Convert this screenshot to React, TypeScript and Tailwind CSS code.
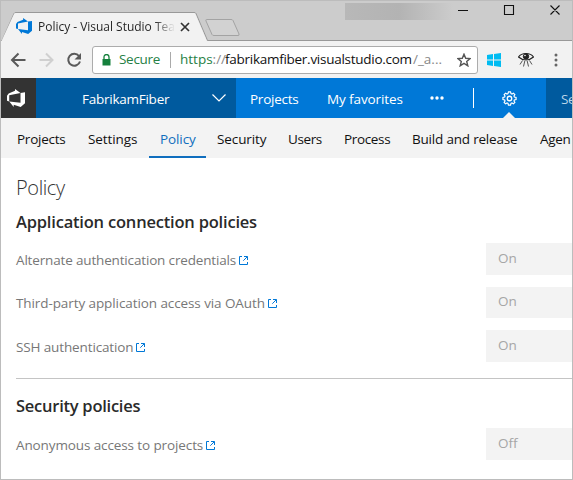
import React from "react";

function DevOpsLogo({ className, fill }: { className: string; fill: string }) {
  return (
    <svg viewBox="0 0 24 24" className={className} fill={fill}>
      <path d="M0 8.877 2.247 5.910l8.405-3.416V.022l7.370 5.393L2.966 8.338v8.225L0 15.707Zm24-4.450v14.651l-5.753 4.900-9.303-3.057v3.056l-5.978-7.416 15.057 1.798V5.415Z" />
    </svg>
  );
}

function ExternalLink() {
  return (
    <svg viewBox="0 0 9 9" className="ml-[3px] h-[9px] w-[9px] shrink-0" fill="none" stroke="#0078d7">
      <path d="M3 .5H.5v8h8V6M5 .5h3.500V4M8.300.7 4.300 4.700" />
    </svg>
  );
}

function PolicyRow({ label, value, className, spacing }: { label: string; value: string; className: string; spacing: string }) {
  return (
    <div className={`flex items-center ${className}`}>
      <div className="flex w-[470px] shrink-0 items-center pt-[2px]">
        <span className={`whitespace-nowrap text-[13.5px] text-[#777] ${spacing}`}>{label}</span>
        <ExternalLink />
      </div>
      <div className="flex h-full flex-1 items-center bg-[#f3f3f3] pb-[2px] pl-3 text-[13.5px] text-[#a6a6a6]">{value}</div>
    </div>
  );
}

function TabStrip() {
  return (
    <div className="relative h-[40px] shrink-0 bg-[#cccccc]">
      <div className="absolute top-[2px] left-[344px] h-[17px] w-[108px] bg-gradient-to-r from-[#b8b8b8] via-[#b3b3b3] to-[#cccccc]" />
      <svg viewBox="0 0 571 40" className="absolute inset-0 h-[40px] w-[571px]">
        <path d="M0 39.500H1L13 12.500Q13.500 11.500 15 11.500H193Q194.500 11.500 195 12.500L206.500 39.500H571" fill="none" stroke="#999" />
        <path d="M.5 40 13 13Q13.500 12 15 12H193Q194 12 194.500 13L206 40Z" fill="#f2f2f2" />
        <path d="M205.500 18.500H230Q231.500 18.500 232 19.500L238 33Q238.500 34.500 237 34.500H213Q211.500 34.500 211 33.500L205 20Q204.500 18.500 205.500 18.500Z" fill="#d2d2d2" stroke="#a3a3a3" />
        <path d="m180 22 8 8m0-8-8 8" stroke="#333" strokeWidth="1.700" />
        <path d="M457 9.500h10M503.500 4.500h9v9h-9ZM549.500 4.500l9 9m0-9-9 9" fill="none" stroke="#111" strokeWidth="1.100" />
      </svg>
      <div className="relative flex h-full pl-[15px] pt-[17px]">
        <DevOpsLogo className="h-4 w-4" fill="#0078d7" />
        <span className="ml-[6px] w-[140px] overflow-hidden whitespace-nowrap bg-gradient-to-r from-[#222222] from-83% to-transparent to-98% bg-clip-text text-[12px] leading-[17px] tracking-[-0.02px] text-transparent">
          Policy - Visual Studio Tea
        </span>
      </div>
    </div>
  );
}

function AddressBar() {
  return (
    <div className="flex h-[37px] shrink-0 items-center bg-[#f2f2f2] pl-[9px]">
      <svg viewBox="0 0 72 16" className="h-4 w-[72px]" fill="none" strokeWidth="2">
        <path d="M15.500 8H2.500M8.500 1.500 2 8l6.500 6.500" stroke="#5a5a5a" />
        <path d="M29.500 8H42M36 1.500l6.500 6.500-6.500 6.500" stroke="#d0d0d0" />
        <path d="M69 4A6 6 0 1 0 70 9.500" stroke="#5a5a5a" />
        <path d="M71 1v6.500h-6.500Z" fill="#5a5a5a" />
      </svg>
      <div className="ml-[10px] flex h-[28px] w-[386px] items-center rounded-[3px] border border-[#acacac] bg-white pl-[9px] text-[13.5px] whitespace-nowrap">
        <svg viewBox="0 0 9 12" className="h-3 w-[9px]" fill="#15803c">
          <path d="M.5 5H8.500V11.500H.5Z" />
          <path d="M2 5.500V3a2.500 2.500 0 0 1 5 0V5.500" fill="none" stroke="#15803c" strokeWidth="1.300" />
        </svg>
        <span className="ml-[8px] w-[51px] tracking-[-0.3px] text-[#268045]">Secure</span>
        <span className="h-4 w-px bg-[#aaa]" />
        <span className="ml-[9px] w-[45px] text-[#268045]">https<span className="text-[#888]">://</span></span>
        <span className="w-[188px] tracking-[-0.27px] text-[#111]">fabrikamfiber.visualstudio.com</span>
        <span className="w-[44px] text-[#888]">/_a...</span>
        <svg viewBox="0 0 14 14" className="h-[14px] w-[14px]" fill="none" stroke="#555" strokeWidth="1.400">
          <path d="m7 1.200 1.700 4.100 4.400.3L9.700 8.400l1.100 4.400L7 10.400l-3.800 2.400 1.100-4.400L.9 5.600l4.400-.3Z" />
        </svg>
      </div>
      <svg viewBox="0 0 14 14" className="ml-[9px] h-[14px] w-[14px]" fill="#00bcf2">
        <path d="M0 2 6 1v5.600H0ZM7 .9 14 0v6.600H7ZM0 7.400h6V13L0 12ZM7 7.400h7V14L7 13Z" />
      </svg>
      <svg viewBox="0 0 16 16" className="ml-[17px] h-4 w-4" fill="none" stroke="#222">
        <path d="M.5 5Q3 1.500 8 1.500T15.500 5Q12 8 8 8T.5 5Z" strokeWidth="1.200" />
        <circle cx="8" cy="4.500" r="2.700" fill="#222" />
        <circle cx="7" cy="3.500" r=".8" fill="#fff" stroke="none" />
        <path d="M4.500 8.500 2 12.500M6.800 9 5.500 14.500M9.200 9l1.300 5.500M11.500 8.500l2.500 4" stroke="#555" />
      </svg>
      <svg viewBox="0 0 4 14" className="ml-[20px] h-[14px] w-1" fill="#666">
        <circle cx="2" cy="2" r="1.500" /><circle cx="2" cy="7" r="1.500" /><circle cx="2" cy="12" r="1.500" />
      </svg>
    </div>
  );
}

function GlobalNav() {
  return (
    <div className="flex h-[40px] shrink-0 items-center bg-[#0078d7] text-[13.5px] text-white whitespace-nowrap">
      <div className="flex h-full w-[35px] items-center bg-[#333] pl-[6px]">
        <DevOpsLogo className="h-[18px] w-[18px]" fill="#fff" />
      </div>
      <div className="flex h-full w-[200px] items-center bg-[#005a9e] pl-[46px]">
        <span className="w-[130px] pt-[2px] tracking-[-0.25px]">FabrikamFiber</span>
        <svg viewBox="0 0 14 8" className="h-2 w-[14px]" fill="none" stroke="#fff" strokeWidth="1.200"><path d="m.5.5 6.500 6.500L13.500.5" /></svg>
      </div>
      <span className="ml-[14px] w-[77px] pt-[2px] tracking-[-0.25px]">Projects</span>
      <span className="w-[103px] pt-[2px] tracking-[-0.1px]">My favorites</span>
      <svg viewBox="0 0 14 4" className="h-1 w-[14px]" fill="#fff"><circle cx="2" cy="2" r="1.700" /><circle cx="7" cy="2" r="1.700" /><circle cx="12" cy="2" r="1.700" /></svg>
      <span className="ml-[29px] h-5 w-px bg-white" />
      <div className="flex h-full w-[72px] flex-col items-center pt-[13px] pr-[2px]">
        <svg viewBox="0 0 16 16" className="h-[15px] w-[15px] shrink-0" fill="none" stroke="#fff">
          <path strokeWidth="1.300" d="M6.900 1h2.200l.5 1.800 1 .4 1.600-.9 1.500 1.500-.9 1.600.4 1 1.800.5v2.200l-1.800.5-.4 1 .9 1.600-1.500 1.500-1.600-.9-1 .4-.5 1.800H6.900l-.5-1.800-1-.4-1.600.9-1.500-1.500.9-1.600-.4-1L1 9.100V6.900l1.800-.5.4-1-.9-1.600 1.500-1.500 1.600.9 1-.4Z" />
          <circle cx="8" cy="8" r="2.400" strokeWidth="1.400" />
        </svg>
        <svg viewBox="0 0 12 6" className="mt-[6px] h-[6px] w-3" fill="#f3f3f3"><path d="M0 6 6 0l6 6Z" /></svg>
      </div>
      <div className="flex h-full w-[26px] shrink-0 items-center overflow-hidden bg-[#005a9e] pt-[2px] pl-[15px] text-[#b8d4e8] tracking-[-0.3px]">Se</div>
    </div>
  );
}

const hubs = [
  { label: "Projects", width: "w-[71px] tracking-[-0.25px]" },
  { label: "Settings", width: "w-[72px] tracking-[-0.1px]" },
  { label: "Policy", width: "w-[57px] tracking-[-0.1px]", active: true },
  { label: "Security", width: "w-[71px] tracking-[-0.1px]" },
  { label: "Users", width: "w-[56px] tracking-[-0.4px]" },
  { label: "Process", width: "w-[68px] tracking-[-0.35px]" },
  { label: "Build and release", width: "w-[128px] tracking-[-0.2px]" },
  { label: "Agen", width: "w-[32px] tracking-[-0.3px]" },
];

function HubNav() {
  return (
    <div className="flex h-[40px] shrink-0 overflow-hidden bg-[#f3f3f3] pl-[16px] text-[13.5px] whitespace-nowrap text-[#111]">
      {hubs.map((h) => (
        <div key={h.label} className={`flex shrink-0 items-center ${h.width} ${h.active ? "-ml-[11px] mr-[11px] border-b-2 border-[#106ebe] pt-[4px] pl-[11px] text-[#106ebe]" : "pt-[2px]"}`}>
          {h.label}
        </div>
      ))}
    </div>
  );
}

export default function App() {
  return (
    <div className="flex h-[480px] w-[573px] flex-col overflow-hidden border border-[#bcbcbc] bg-white font-['Open_Sans','Noto_Sans',sans-serif]">
      <TabStrip />
      <AddressBar />
      <GlobalNav />
      <HubNav />
      <main className="flex flex-col pl-[15px]">
        <h1 className="mt-[16px] h-[28px] text-[20px] leading-[28px] font-light tracking-[-0.4px] text-[#333]">Policy</h1>
        <h2 className="mt-[8px] h-[24px] text-[16.5px] leading-[24px] font-semibold tracking-[-0.2px] text-[#2a2a2a]">Application connection policies</h2>
        <PolicyRow className="mt-[9px] h-[32px]" label="Alternate authentication credentials" value="On" spacing="tracking-[-0.16px]" />
        <PolicyRow className="mt-[12px] h-[31px]" label="Third-party application access via OAuth" value="On" spacing="tracking-[-0.09px]" />
        <PolicyRow className="mt-[12px] h-[32px]" label="SSH authentication" value="On" spacing="tracking-[-0.13px]" />
        <hr className="mt-[16px] h-px border-0 bg-[#c4c4c4]" />
        <h2 className="mt-[15px] h-[24px] text-[16.5px] leading-[24px] font-semibold tracking-[-0.25px] text-[#2a2a2a]">Security policies</h2>
        <PolicyRow className="mt-[10px] h-[32px]" label="Anonymous access to projects" value="Off" spacing="tracking-[-0.11px]" />
      </main>
    </div>
  );
}
